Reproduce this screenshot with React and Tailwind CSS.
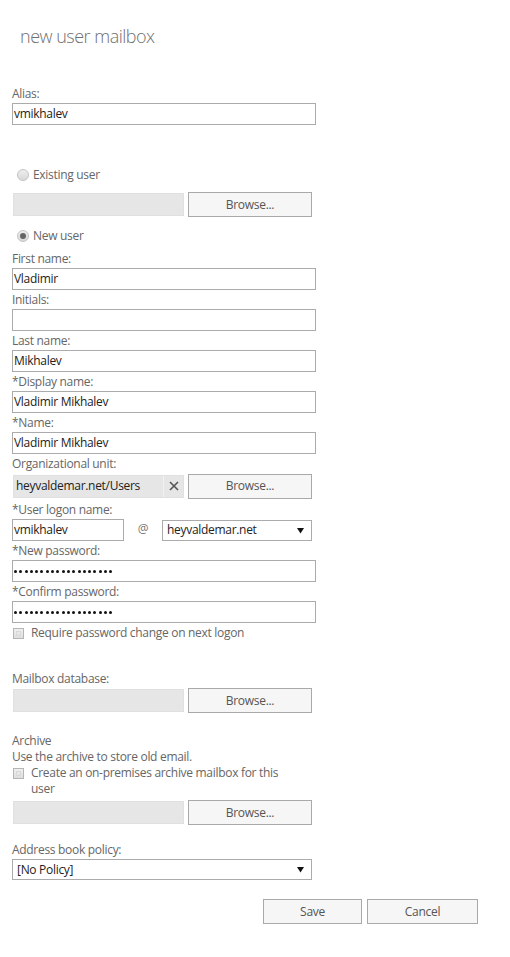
import React from "react";

const F = { fontFamily: '"Open Sans", "Noto Sans", sans-serif', letterSpacing: "-0.3px" };

function Label({ children }) {
  return <div className="h-[19px] leading-[19px] text-[12px] text-[#666]">{children}</div>;
}

function Input({ value, w = "w-[304px]" }) {
  return (
    <div className={`${w} h-[22px] border border-[#ababab] bg-white px-[1px] text-[12px] leading-[20px] text-[#222]`}>
      {value}
    </div>
  );
}

function Password() {
  return (
    <div className="w-[304px] h-[22px] border border-[#ababab] bg-white pl-[1px] flex items-center gap-[2.3px]">
      {Array.from({ length: 19 }).map((_, i) => (
        <span key={i} className="block w-[3px] h-[3px] rounded-full bg-[#111]" />
      ))}
    </div>
  );
}

function Browse({ w = "w-[124px]" }) {
  return (
    <div className={`${w} h-[25px] border border-[#a9a9a9] bg-[#f6f6f6] flex items-center justify-center text-[12px] text-[#555]`}>
      Browse...
    </div>
  );
}

function GrayRow() {
  return (
    <div className="flex items-center gap-[4px] h-[25px]">
      <div className="ml-[1px] w-[171px] h-[23px] bg-[#e6e6e6] border border-[#e0e0e0]" />
      <Browse />
    </div>
  );
}

function Radio({ checked, children }) {
  return (
    <div className="flex items-center h-[19px] pl-[5px] gap-[4px] text-[12px] text-[#666]">
      <span className="w-[12px] h-[12px] rounded-full border border-[#c4c4c4] bg-gradient-to-b from-[#eeeeee] to-[#d9d9d9] flex items-center justify-center">
        {checked && <span className="w-[6px] h-[6px] rounded-full bg-[#666]" />}
      </span>
      <span>{children}</span>
    </div>
  );
}

function Checkbox() {
  return (
    <span className="w-[11px] h-[11px] shrink-0 border border-[#b5b5b5] bg-gradient-to-b from-[#f0f0f0] to-[#dedede] flex items-center justify-center">
      <span className="w-[5px] h-[5px] border border-[#d8d8d8]" />
    </span>
  );
}

function Select({ value, w }) {
  return (
    <div className={`${w} h-[21px] border border-[#ababab] bg-white flex items-center justify-between pl-[4px] pr-[7px] text-[12px] text-[#222]`}>
      <span>{value}</span>
      <svg width="7" height="7" viewBox="0 0 7 7"><path d="M0 1 L7 1 L3.5 6.5 Z" fill="#111" /></svg>
    </div>
  );
}

export default function App() {
  return (
    <div className="w-[510px] h-[957px] bg-white" style={F}>
      <div className="pt-[22px] pl-[20px] h-[84px]">
        <div
          className="text-[18px] leading-[28px] font-light text-[#707070]"
          style={{ fontFamily: '"Open Sans", sans-serif', letterSpacing: "-0.5px" }}
        >
          new user mailbox
        </div>
      </div>
      <div className="pl-[12px] flex flex-col">
        <Label>Alias:</Label>
        <Input value="vmikhalev" />
        <div className="mt-[40px]">
          <Radio>Existing user</Radio>
        </div>
        <div className="mt-[8px]">
          <GrayRow />
        </div>
        <div className="mt-[9px]">
          <Radio checked>New user</Radio>
        </div>
        <div className="mt-[4px]" />
        <Label>First name:</Label>
        <Input value="Vladimir" />
        <Label>Initials:</Label>
        <Input value="" />
        <Label>Last name:</Label>
        <Input value="Mikhalev" />
        <Label>*Display name:</Label>
        <Input value="Vladimir Mikhalev" />
        <Label>*Name:</Label>
        <Input value="Vladimir Mikhalev" />
        <Label>Organizational unit:</Label>
        <div className="flex items-center gap-[4px] h-[26px]">
          <div className="ml-[1px] w-[171px] h-[23px] bg-[#e6e6e6] border border-[#e0e0e0] flex items-center">
            <span className="flex-1 pl-[2px] text-[12px] text-[#222]">heyvaldemar.net/Users</span>
            <span className="w-[20px] h-full border-l border-[#f2f2f2] flex items-center justify-center">
              <svg width="10" height="10" viewBox="0 0 10 10">
                <path d="M1 1 L9 9 M9 1 L1 9" stroke="#555" strokeWidth="1.6" />
              </svg>
            </span>
          </div>
          <Browse />
        </div>
        <div className="mt-[1px]" />
        <Label>*User logon name:</Label>
        <div className="flex items-center h-[22px]">
          <Input value="vmikhalev" w="w-[112px]" />
          <span className="w-[38px] text-center text-[12px] text-[#777] -mt-[3px]">@</span>
          <Select value="heyvaldemar.net" w="w-[150px]" />
        </div>
        <Label>*New password:</Label>
        <Password />
        <Label>*Confirm password:</Label>
        <Password />
        <div className="flex items-center h-[20px] gap-[7px] text-[12px] text-[#666] pl-[1px]">
          <Checkbox />
          <span>Require password change on next logon</span>
        </div>
        <div className="mt-[26px]" />
        <Label>Mailbox database:</Label>
        <GrayRow />
        <div className="mt-[20px] text-[12px] leading-[16px] text-[#666]">
          <div>Archive</div>
          <div>Use the archive to store old email.</div>
          <div className="flex gap-[7px] pl-[1px]">
            <span className="mt-[3px]"><Checkbox /></span>
            <span className="w-[270px]">Create an on-premises archive mailbox for this user</span>
          </div>
        </div>
        <div className="mt-[3px]">
          <GrayRow />
        </div>
        <div className="mt-[15px]" />
        <Label>Address book policy:</Label>
        <Select value="[No Policy]" w="w-[300px]" />
      </div>
      <div className="mt-[19px] flex justify-end gap-[5px] pr-[32px]">
        <div className="w-[99px] h-[25px] border border-[#a9a9a9] bg-[#f6f6f6] flex items-center justify-center text-[12px] text-[#555]">Save</div>
        <div className="w-[111px] h-[25px] border border-[#a9a9a9] bg-[#f6f6f6] flex items-center justify-center text-[12px] text-[#555]">Cancel</div>
      </div>
    </div>
  );
}
